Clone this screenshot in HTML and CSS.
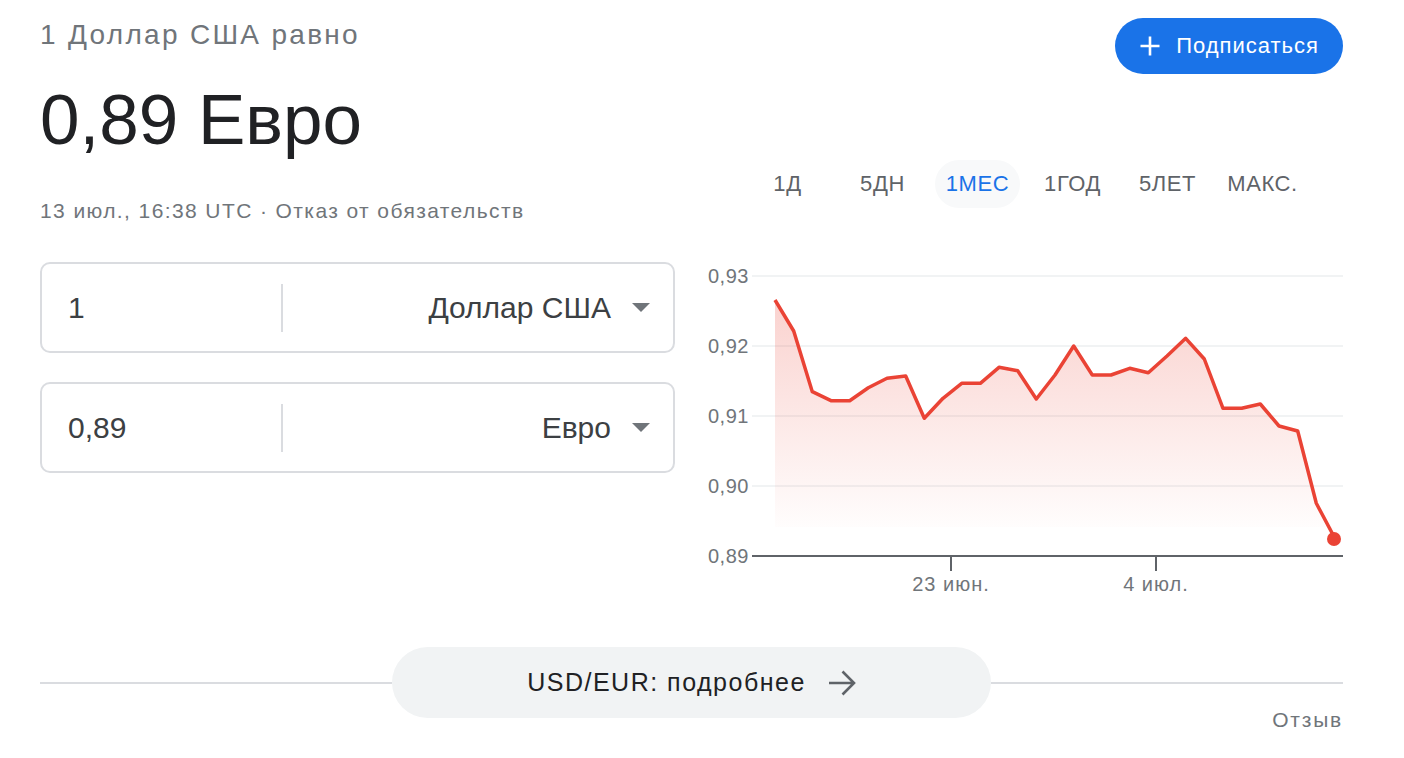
FILE: index.html
```html
<!DOCTYPE html>
<html lang="ru">
<head>
  <meta charset="UTF-8">
  <title>USD / EUR</title>
  <meta name="viewport" content="width=device-width, initial-scale=1.0">
  <link rel="stylesheet" href="styles.css">
</head>
<body>
  <div class="card">
    <div class="main">
      <div class="left">
        <div class="title">1 Доллар США равно</div>
        <div class="big">0,89 Евро</div>
        <div class="date">13 июл., 16:38 UTC · Отказ от обязательств</div>

        <div class="convs">
          <div class="conv">
            <div class="amount">1</div>
            <div class="sep"></div>
            <div class="unit">
              <span>Доллар США</span>
              <svg class="caret" width="18" height="9" viewBox="0 0 18 9"><polygon points="0,0 18,0 9,9"/></svg>
            </div>
          </div>
          <div class="conv">
            <div class="amount">0,89</div>
            <div class="sep"></div>
            <div class="unit">
              <span>Евро</span>
              <svg class="caret" width="18" height="9" viewBox="0 0 18 9"><polygon points="0,0 18,0 9,9"/></svg>
            </div>
          </div>
        </div>
      </div>

      <div class="right">
        <div class="sub-row">
          <button class="subscribe">
            <svg width="22" height="22" viewBox="0 0 22 22"><path d="M11 1.5v19M1.5 11h19" stroke="#fff" stroke-width="2.6" fill="none"/></svg>
            <span>Подписаться</span>
          </button>
        </div>

        <div class="tabs">
          <div class="tab">1Д</div>
          <div class="tab">5ДН</div>
          <div class="tab active">1МЕС</div>
          <div class="tab">1ГОД</div>
          <div class="tab">5ЛЕТ</div>
          <div class="tab">МАКС.</div>
        </div>

        <svg class="chart" width="653" height="340" viewBox="690 256 653 340">
          <defs>
            <linearGradient id="fade" x1="0" y1="0" x2="0" y2="1">
              <stop offset="0" stop-color="#ea4335" stop-opacity="0.24"/>
              <stop offset="1" stop-color="#ea4335" stop-opacity="0"/>
            </linearGradient>
          </defs>
          <g class="grid">
            <line x1="752" y1="276" x2="1343" y2="276"/>
            <line x1="752" y1="346" x2="1343" y2="346"/>
            <line x1="752" y1="416" x2="1343" y2="416"/>
            <line x1="752" y1="486" x2="1343" y2="486"/>
          </g>
          <g class="ylab">
            <text x="708" y="283">0,93</text>
            <text x="708" y="353">0,92</text>
            <text x="708" y="423">0,91</text>
            <text x="708" y="493">0,90</text>
            <text x="708" y="563">0,89</text>
          </g>
          <path class="area" d="M775,300 L793.7,331 L812.3,391.7 L831,400.7 L849.7,400.7 L868.3,387.7 L887,378.3 L905.7,376 L924.3,418.3 L943,398.3 L961.7,383.3 L980.3,383.3 L999,367.3 L1017.7,370.7 L1036.3,399 L1055,375 L1073.7,346 L1092.3,375 L1111,375 L1129.7,368.3 L1148.3,372.7 L1167,356 L1185.7,338.3 L1204.3,359 L1223,408.3 L1241.7,408.3 L1260.3,404 L1279,426 L1297.7,431 L1316.3,503.3 L1335,538.5 L1335,527 L775,527 Z"/>
          <path class="line" d="M775,300 L793.7,331 L812.3,391.7 L831,400.7 L849.7,400.7 L868.3,387.7 L887,378.3 L905.7,376 L924.3,418.3 L943,398.3 L961.7,383.3 L980.3,383.3 L999,367.3 L1017.7,370.7 L1036.3,399 L1055,375 L1073.7,346 L1092.3,375 L1111,375 L1129.7,368.3 L1148.3,372.7 L1167,356 L1185.7,338.3 L1204.3,359 L1223,408.3 L1241.7,408.3 L1260.3,404 L1279,426 L1297.7,431 L1316.3,503.3 L1335,538.5"/>
          <circle class="dot" cx="1334" cy="539" r="7"/>
          <g class="axis">
            <line x1="752" y1="556" x2="1343" y2="556"/>
            <line x1="951" y1="556" x2="951" y2="571"/>
            <line x1="1156" y1="556" x2="1156" y2="571"/>
          </g>
          <g class="xlab">
            <text x="951" y="591">23 июн.</text>
            <text x="1156" y="591">4 июл.</text>
          </g>
        </svg>
      </div>
    </div>

    <div class="more-row">
      <div class="rule"></div>
      <a class="more" href="#">
        <span>USD/EUR: подробнее</span>
        <svg width="28" height="28" viewBox="0 0 28 28"><path d="M1 14H26M14.5 2.5L26 14L14.5 25.5" stroke="#5f6368" stroke-width="2.6" fill="none"/></svg>
      </a>
      <div class="rule"></div>
    </div>
    <div class="feedback">Отзыв</div>
  </div>
</body>
</html>
```

FILE: styles.css
```css
body { margin: 0; background: #fff; font-family: "Liberation Sans", Arial, sans-serif; color: #202124; }
.card { width: 1303px; padding: 0 61px 0 40px; }
.main { display: flex; justify-content: space-between; }
.left { width: 635px; }
.right { width: 653px; }

.title { margin-top: 18px; font-size: 28px; line-height: 34px; letter-spacing: 2.3px; color: #70757a; }
.big { margin-top: 28px; font-size: 71px; line-height: 80px; color: #202124; }
.date { margin-top: 37px; font-size: 21px; line-height: 28px; letter-spacing: 1.4px; color: #70757a; }

.convs { display: flex; flex-direction: column; gap: 29px; margin-top: 37px; }
.conv { display: flex; align-items: center; height: 87px; border: 2px solid #dadce0; border-radius: 10px; }
.amount { width: 213px; padding-left: 26px; font-size: 30px; color: #3c4043; }
.sep { width: 2px; height: 48px; background: #dadce0; }
.unit { flex: 1; display: flex; justify-content: flex-end; align-items: center; gap: 21px; padding-right: 23px; font-size: 30px; color: #3c4043; }
.caret { fill: #70757a; }

.sub-row { display: flex; justify-content: flex-end; margin-top: 18px; }
.subscribe { display: flex; align-items: center; gap: 15px; height: 56px; padding: 0 24px; border: 0; border-radius: 28px; background: #1a73e8; color: #fff; font-family: inherit; font-size: 22px; letter-spacing: 1px; }

.tabs { display: flex; gap: 10px; margin: 86px 0 0 55px; }
.tab { width: 85px; height: 48px; line-height: 48px; text-align: center; border-radius: 24px; font-size: 22px; letter-spacing: 0.6px; color: #5f6368; }
.tab.active { background: #f8f9fa; color: #1a73e8; }

.chart { display: block; margin-top: 48px; }
.grid line { stroke: #f1f3f4; stroke-width: 2; }
.axis line { stroke: #5f6368; stroke-width: 2; }
.ylab text { font-size: 20px; letter-spacing: 0.5px; fill: #70757a; }
.xlab text { font-size: 20px; letter-spacing: 1px; fill: #70757a; text-anchor: middle; }
.area { fill: url(#fade); }
.line { fill: none; stroke: #ea4335; stroke-width: 3.5; stroke-linejoin: round; }
.dot { fill: #ea4335; }

.more-row { display: flex; align-items: center; margin-top: 51px; }
.rule { flex: 1; height: 2px; background: #dadce0; }
.more { display: flex; align-items: center; justify-content: center; gap: 22px; width: 599px; height: 71px; border-radius: 36px; background: #f1f3f4; color: #202124; text-decoration: none; font-size: 25px; letter-spacing: 1.5px; }
.feedback { margin-top: -10px; text-align: right; font-size: 21px; line-height: 24px; letter-spacing: 1.8px; color: #70757a; }
```
